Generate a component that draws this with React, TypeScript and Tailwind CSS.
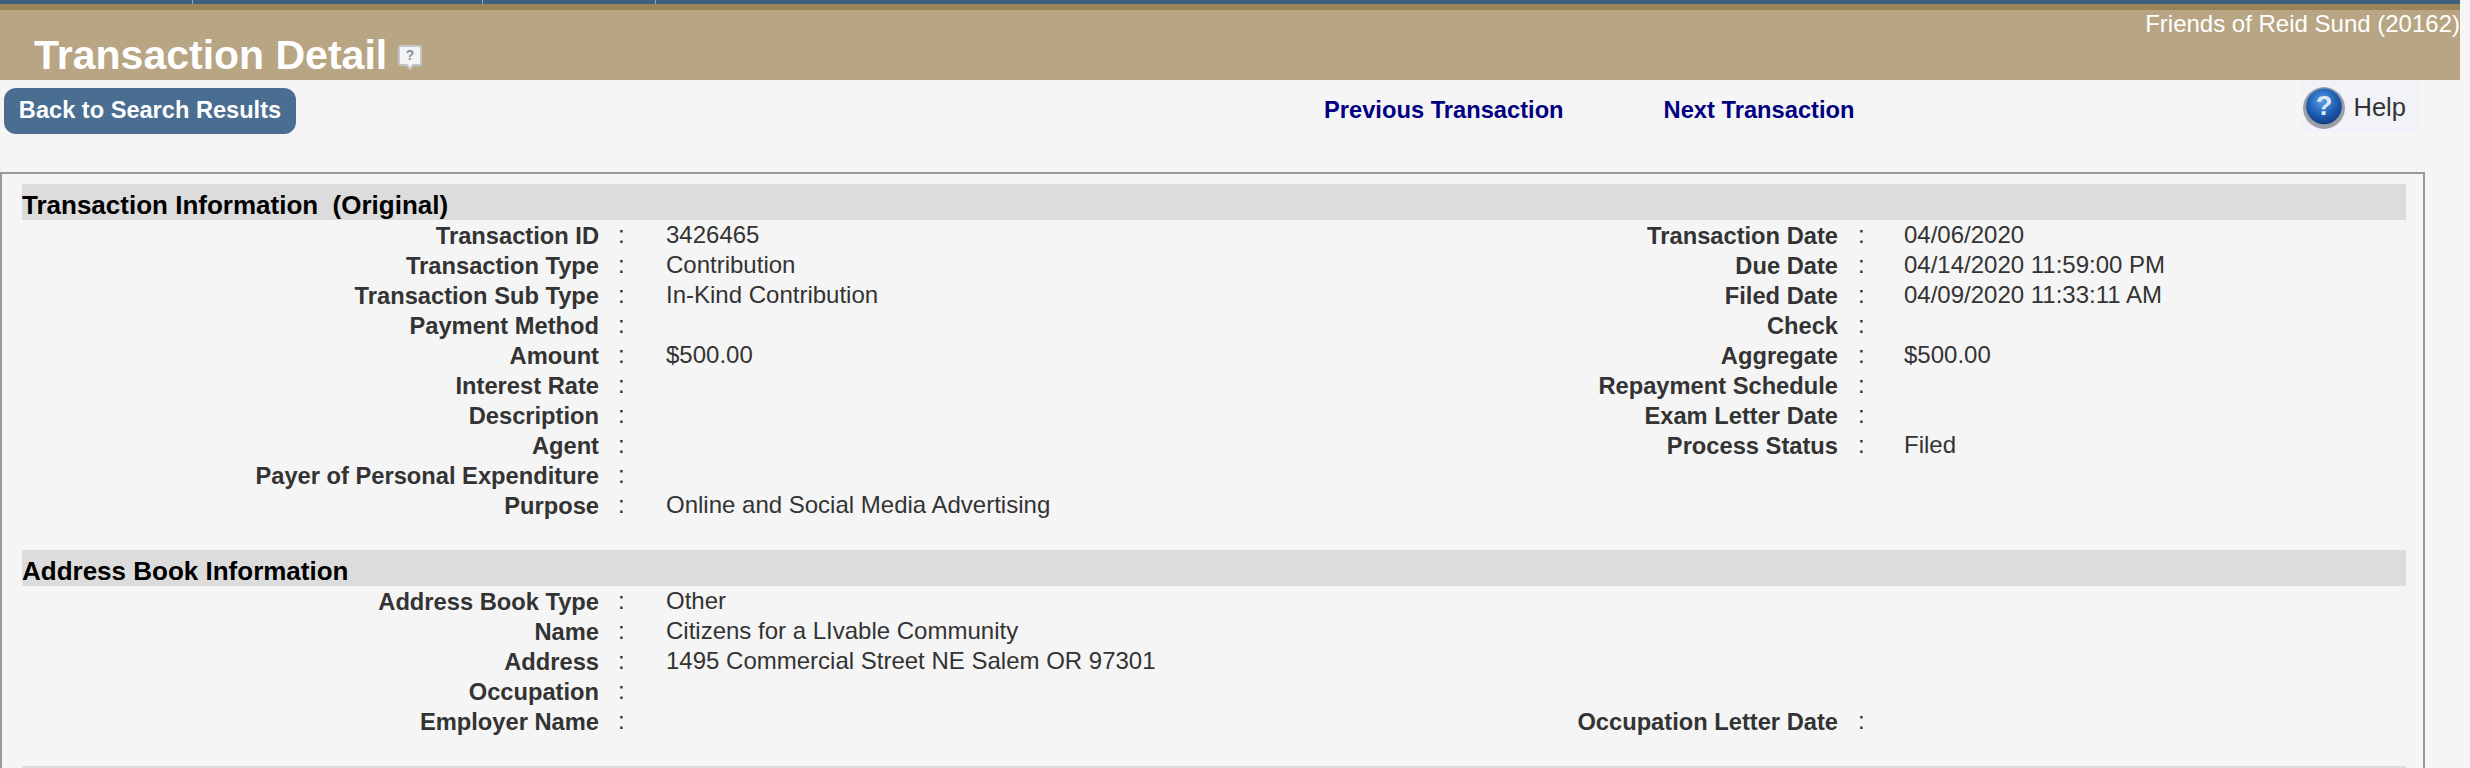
const Row = ({ label, value }: { label: string; value?: string }) => (
  <div className="flex h-[30px] items-center">
    <div className="w-[577px] shrink-0 whitespace-nowrap pt-[3px] text-right text-[23.7px] font-bold text-[#333]">{label}</div>
    <div className="w-[67px] shrink-0 pl-[19px] text-[#333]">:</div>
    <div className="-mt-[1px] text-[#333]">{value}</div>
  </div>
);

const RowR = ({ label, value }: { label: string; value?: string }) => (
  <div className="flex h-[30px] items-center">
    <div className="w-[600px] shrink-0 whitespace-nowrap pt-[3px] text-right text-[23.7px] font-bold text-[#333]">{label}</div>
    <div className="w-[66px] shrink-0 pl-[20px] text-[#333]">:</div>
    <div className="-mt-[1px] text-[#333]">{value}</div>
  </div>
);

const Bar = ({ children }: { children?: string }) => (
  <div className="flex h-9 items-center whitespace-pre bg-[#dcdcdc] pt-[6px] text-[26px] font-bold text-black">{children}</div>
);

const left = [
  ["Transaction ID", "3426465"],
  ["Transaction Type", "Contribution"],
  ["Transaction Sub Type", "In-Kind Contribution"],
  ["Payment Method", ""],
  ["Amount", "$500.00"],
  ["Interest Rate", ""],
  ["Description", ""],
  ["Agent", ""],
  ["Payer of Personal Expenditure", ""],
  ["Purpose", "Online and Social Media Advertising"],
];
const right = [
  ["Transaction Date", "04/06/2020"],
  ["Due Date", "04/14/2020 11:59:00 PM"],
  ["Filed Date", "04/09/2020 11:33:11 AM"],
  ["Check", ""],
  ["Aggregate", "$500.00"],
  ["Repayment Schedule", ""],
  ["Exam Letter Date", ""],
  ["Process Status", "Filed"],
];
const left2 = [
  ["Address Book Type", "Other"],
  ["Name", "Citizens for a LIvable Community"],
  ["Address", "1495 Commercial Street NE Salem OR 97301"],
  ["Occupation", ""],
  ["Employer Name", ""],
];

export default function App() {
  return (
    <div className="h-[768px] w-[2470px] overflow-hidden bg-[#f5f5f5] text-[24px] font-['Liberation_Sans',Arial,sans-serif]">
      <div className="flex h-1 w-[2460px] bg-[#3f5f7f]">
        <div className="w-[193px] border-r border-[#8fa3b5]" />
        <div className="w-[290px] border-r border-[#8fa3b5]" />
        <div className="w-[173px] border-r border-[#8fa3b5]" />
      </div>
      <div className="h-[6px] w-[2460px] bg-[#9c8459]" />
      <div className="h-[70px] w-[2460px] bg-[#b8a584]">
        <div className="flex h-[28px] items-center justify-end text-[24px] leading-none text-white">Friends of Reid Sund (20162)</div>
        <div className="-mt-[1px] flex items-center pl-[34px]">
          <span className="text-[41px] font-bold leading-[36px] text-white">Transaction Detail</span>
          <svg width="24" height="26" viewBox="0 0 24 26" className="ml-[11px] mt-[4px]">
            <path d="M3 2h18a2 2 0 0 1 2 2v15a2 2 0 0 1-2 2h-6l-3 4-3-4H3a2 2 0 0 1-2-2V4a2 2 0 0 1 2-2z" fill="#f3f4f6" stroke="#c3c7cc" strokeWidth="2" />
            <text x="12" y="16" textAnchor="middle" fontSize="14" fontWeight="700" fill="#8b8f96" fontFamily="Liberation Sans">?</text>
          </svg>
        </div>
      </div>
      <div className="flex h-[92px] items-start">
        <button className="ml-1 mt-2 flex h-[46px] w-[292px] items-center justify-center rounded-[12px] bg-[#4a6d92] text-[23.6px] font-bold text-white">Back to Search Results</button>
        <a className="ml-[1028px] mt-[18px] text-[23.7px] font-bold leading-[24px] text-[#000080]">Previous Transaction</a>
        <a className="ml-[100px] mt-[18px] text-[23.7px] font-bold leading-[24px] text-[#000080]">Next Transaction</a>
        <div className="ml-[447px] flex h-[52px] w-[120px] items-center bg-[#f1f3f9] pl-[1px] pt-[3px]">
          <svg width="44" height="44" viewBox="0 0 42 42">
            <defs>
              <radialGradient id="ball" cx="45%" cy="35%" r="65%">
                <stop offset="0%" stopColor="#5aa0e6" />
                <stop offset="60%" stopColor="#1f5fb5" />
                <stop offset="100%" stopColor="#123f85" />
              </radialGradient>
            </defs>
            <circle cx="21" cy="21" r="20" fill="#9a9ea6" />
            <circle cx="21" cy="19.5" r="17" fill="url(#ball)" />
            <text x="21" y="28" textAnchor="middle" fontSize="26" fontWeight="700" fill="#dfe9f6" fontFamily="Liberation Sans">?</text>
          </svg>
          <span className="ml-[7px] text-[25.5px] leading-none text-[#333]">Help</span>
        </div>
      </div>
      <div className="w-[2425px] border-2 border-[#999] px-[20px] pt-[10px]">
        <div className="w-[2384px]">
          <Bar>{"Transaction Information  (Original)"}</Bar>
          <div className="flex">
            <div className="w-[1216px] shrink-0">
              {left.map(([l, v]) => <Row key={l} label={l} value={v} />)}
            </div>
            <div>
              {right.map(([l, v]) => <RowR key={l} label={l} value={v} />)}
            </div>
          </div>
          <div className="h-[30px]" />
          <Bar>Address Book Information</Bar>
          <div className="flex">
            <div className="w-[1216px] shrink-0">
              {left2.map(([l, v]) => <Row key={l} label={l} value={v} />)}
            </div>
            <div>
              <div className="h-[120px]" />
              <RowR label="Occupation Letter Date" value="" />
            </div>
          </div>
          <div className="h-[30px]" />
          <Bar />
        </div>
      </div>
    </div>
  );
}
